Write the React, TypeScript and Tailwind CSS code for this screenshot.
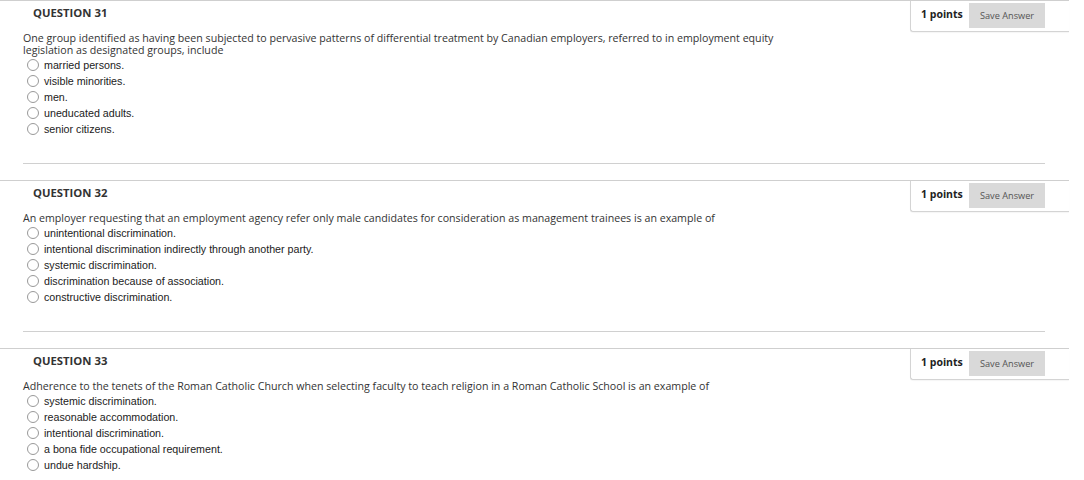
const QUESTIONS = [
  {
    n: 31,
    text: "One group identified as having been subjected to pervasive patterns of differential treatment by Canadian employers, referred to in employment equity legislation as designated groups, include",
    options: ["married persons.", "visible minorities.", "men.", "uneducated adults.", "senior citizens."],
  },
  {
    n: 32,
    text: "An employer requesting that an employment agency refer only male candidates for consideration as management trainees is an example of",
    options: [
      "unintentional discrimination.",
      "intentional discrimination indirectly through another party.",
      "systemic discrimination.",
      "discrimination because of association.",
      "constructive discrimination.",
    ],
  },
  {
    n: 33,
    text: "Adherence to the tenets of the Roman Catholic Church when selecting faculty to teach religion in a Roman Catholic School is an example of",
    options: [
      "systemic discrimination.",
      "reasonable accommodation.",
      "intentional discrimination.",
      "a bona fide occupational requirement.",
      "undue hardship.",
    ],
  },
];

function Question({ q }: { q: (typeof QUESTIONS)[number] }) {
  return (
    <section className="border-t border-[#cfcfcf]">
      <div className="flex items-start justify-between h-[31px]">
        <h3 className="pl-[33px] pt-[4px] text-[11.3px] font-bold leading-[16px] text-[#333] font-['Open_Sans',sans-serif]">
          QUESTION {q.n}
        </h3>
        <div className="flex items-center w-[159px] h-[31px] border-l border-b border-[#d4d4d4] rounded-bl-[3px] bg-white pl-[10px] shadow-[0_1px_1px_rgb(0_0_0/4%)]">
          <span className="-mt-[2px] text-[10.5px] font-bold text-[#222] font-['Open_Sans',sans-serif] w-[48px]">1 points</span>
          <button
            type="button"
            className="h-[25px] w-[76px] -mt-[1px] bg-[#d9d9d9] text-[9.2px] text-[#555] font-['Open_Sans',sans-serif]"
          >
            Save Answer
          </button>
        </div>
      </div>
      <div className="pl-[23px] pr-[24px]">
        <p className="max-w-[770px] text-[10.65px] leading-[12px] text-[#333] font-['Open_Sans',sans-serif]">{q.text}</p>
        <ul className="mt-[1px]">
          {q.options.map((o) => (
            <li key={o} className="flex items-center h-[16px] pl-[4px]">
              <span className="size-[12px] rounded-full border border-[#999] bg-white" />
              <span className="ml-[5px] text-[10.7px] text-[#222] font-['Liberation_Sans',Arial,sans-serif]">{o}</span>
            </li>
          ))}
        </ul>
        <hr className="mt-[26px] mb-[16px] border-t border-[#d0d0d0]" />
      </div>
    </section>
  );
}

export default function App() {
  return (
    <div className="w-[1069px] bg-white">
      {QUESTIONS.map((q) => (
        <Question key={q.n} q={q} />
      ))}
    </div>
  );
}
